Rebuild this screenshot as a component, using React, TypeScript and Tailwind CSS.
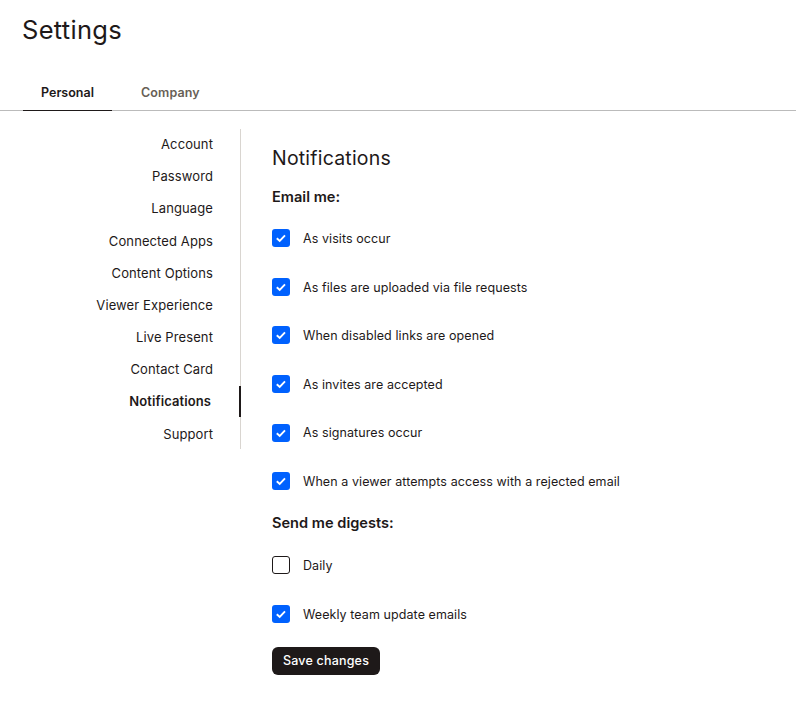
import React from "react";

const nav = ["Account","Password","Language","Connected Apps","Content Options","Viewer Experience","Live Present","Contact Card","Notifications","Support"];
const email = ["As visits occur","As files are uploaded via file requests","When disabled links are opened","As invites are accepted","As signatures occur","When a viewer attempts access with a rejected email"];

function Row({label, checked=true}:{label:string; checked?:boolean}) {
  return (
    <div className="flex h-[48.6px] items-center">
      {checked ? (
        <span className="flex h-[18px] w-[18px] items-center justify-center rounded-[3px] bg-[#0061fe]">
          <svg width="12" height="12" viewBox="0 0 12 12" fill="none"><path d="M1.8 6.2 L4.7 8.9 L10 3.4" stroke="#fff" strokeWidth="1.9"/></svg>
        </span>
      ) : (
        <span className="h-[18px] w-[18px] rounded-[3px] border border-[#1e1919] bg-white" />
      )}
      <span className="ml-[13px] pt-[2px] text-[12.5px] tracking-[0.08px] text-[#1e1919]">{label}</span>
    </div>
  );
}

export default function App() {
  return (
    <div className="h-[724px] w-[796px] overflow-hidden bg-white font-['Inter',sans-serif] text-[#1e1919]">
      <h1 className="pl-[22px] pt-[14px] text-[25.5px] leading-[32px] tracking-[0.3px]">Settings</h1>
      <div className="mt-[29px] flex h-[36px] border-b border-[#bbbbbb] pl-[23px] pt-[1px] text-[12.5px] font-semibold">
        <div className="flex w-[89px] items-center justify-center border-b-[1.5px] border-[#1e1919] -mb-px">Personal</div>
        <div className="ml-[29px] flex items-center tracking-[0.1px] text-[#685f56]">Company</div>
      </div>
      <div className="mt-[18px] flex">
        <nav className="h-[320px] w-[241px] border-r border-[#d9d5d0] text-right text-[13px] tracking-[0.1px]">
          <div className="-mt-[0.4px] flex flex-col">
            {nav.map(n => n === "Notifications" ? (
              <div key={n} className="relative flex h-[32.2px] shrink-0 items-center justify-end pr-[29px] font-semibold">
                {n}
                <span className="absolute right-[-1px] top-0 h-[31px] w-[2px] bg-[#1e1919]" />
              </div>
            ) : (
              <div key={n} className="flex h-[32.2px] shrink-0 items-center justify-end pr-[27px]">{n}</div>
            ))}
          </div>
        </nav>
        <main className="pl-[31px]">
          <h2 className="mt-[16px] text-[19.5px] leading-[26px] tracking-[0.2px]">Notifications</h2>
          <h3 className="mt-[16px] text-[14.6px] leading-[20px] font-semibold">Email me:</h3>
          <div className="mt-[7px]">{email.map(e => <Row key={e} label={e} />)}</div>
          <h3 className="mt-[7px] text-[14.6px] leading-[20px] font-semibold">Send me digests:</h3>
          <div className="mt-[8.5px]">
            <Row label="Daily" checked={false} />
            <Row label="Weekly team update emails" />
          </div>
          <button className="mt-[9px] flex h-[28px] w-[108px] items-center justify-center rounded-[6px] bg-[#1e1919] text-[12.5px] font-medium tracking-[0.2px] text-white">Save changes</button>
        </main>
      </div>
    </div>
  );
}
